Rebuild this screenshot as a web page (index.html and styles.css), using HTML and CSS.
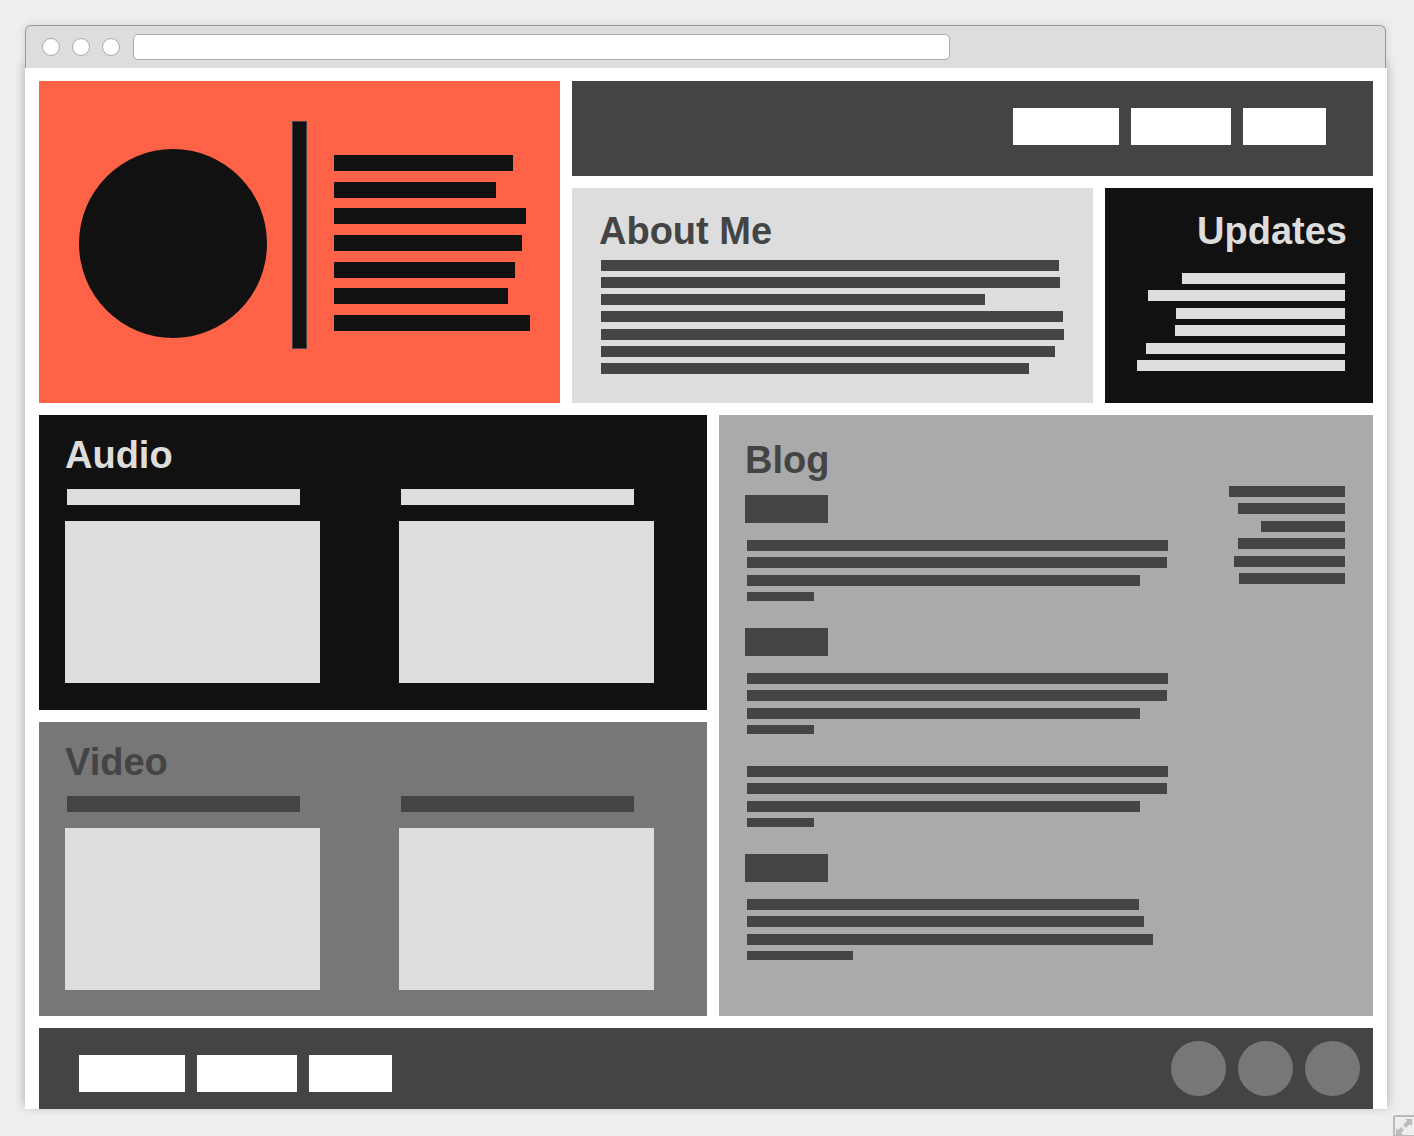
FILE: index.html
```html
<!DOCTYPE html>
<html lang="en">
<head>
<meta charset="utf-8">
<meta name="viewport" content="width=device-width, initial-scale=1">
<title>Wireframe</title>
<link rel="stylesheet" href="styles.css">
</head>
<body>
<div class="browser">
  <div class="toolbar">
    <div class="dots"><span class="dot"></span><span class="dot"></span><span class="dot"></span></div>
    <input class="address" type="text" aria-label="Address">
  </div>
  <div class="page">
    <div class="top">
      <section class="panel hero">
        <div class="portrait"></div>
        <div class="divider"></div>
        <div class="lines lines-hero">
          <i style="width:179px"></i><i style="width:162px"></i><i style="width:192px"></i><i style="width:188px"></i><i style="width:181px"></i><i style="width:174px"></i><i style="width:196px"></i>
        </div>
      </section>
      <nav class="panel links links-top" aria-label="Main">
        <a class="link link-l" href="#about" aria-label="About Me"></a>
        <a class="link link-m" href="#audio" aria-label="Audio"></a>
        <a class="link link-s" href="#blog" aria-label="Blog"></a>
      </nav>
      <div class="intro">
        <section class="panel about" id="about">
          <h2>About Me</h2>
          <div class="lines lines-about">
            <i style="width:458px"></i><i style="width:459px"></i><i style="width:384px"></i><i style="width:462px"></i><i style="width:463px"></i><i style="width:454px"></i><i style="width:428px"></i>
          </div>
        </section>
        <section class="panel updates">
          <h2>Updates</h2>
          <div class="lines lines-right">
            <i style="width:163px"></i><i style="width:197px"></i><i style="width:169px"></i><i style="width:170px"></i><i style="width:199px"></i><i style="width:208px"></i>
          </div>
        </section>
      </div>
    </div>
    <div class="middle">
      <div class="media-column">
        <section class="panel media audio" id="audio">
          <h2>Audio</h2>
          <div class="clips">
            <div class="clip"><div class="clip-title"></div><div class="clip-box"></div></div>
            <div class="clip"><div class="clip-title"></div><div class="clip-box"></div></div>
          </div>
        </section>
        <section class="panel media video">
          <h2>Video</h2>
          <div class="clips">
            <div class="clip"><div class="clip-title"></div><div class="clip-box"></div></div>
            <div class="clip"><div class="clip-title"></div><div class="clip-box"></div></div>
          </div>
        </section>
      </div>
      <section class="panel blog" id="blog">
        <div class="posts">
          <h2>Blog</h2>
          <article class="post">
            <div class="tag"></div>
            <div class="lines lines-post"><i style="width:421px"></i><i style="width:420px"></i><i style="width:393px"></i><i class="more" style="width:67px"></i></div>
          </article>
          <article class="post">
            <div class="tag"></div>
            <div class="lines lines-post"><i style="width:421px"></i><i style="width:420px"></i><i style="width:393px"></i><i class="more" style="width:67px"></i></div>
            <div class="lines lines-post continued"><i style="width:421px"></i><i style="width:420px"></i><i style="width:393px"></i><i class="more" style="width:67px"></i></div>
          </article>
          <article class="post">
            <div class="tag"></div>
            <div class="lines lines-post"><i style="width:392px"></i><i style="width:397px"></i><i style="width:406px"></i><i class="more" style="width:106px"></i></div>
          </article>
        </div>
        <aside class="archive">
          <div class="lines lines-right">
            <i style="width:116px"></i><i style="width:107px"></i><i style="width:84px"></i><i style="width:107px"></i><i style="width:111px"></i><i style="width:106px"></i>
          </div>
        </aside>
      </section>
    </div>
    <footer class="panel footer">
      <nav class="links links-bottom" aria-label="Footer">
        <a class="link link-l" href="#about" aria-label="About Me"></a>
        <a class="link link-m" href="#audio" aria-label="Audio"></a>
        <a class="link link-s" href="#blog" aria-label="Blog"></a>
      </nav>
      <div class="social"><span></span><span></span><span></span></div>
    </footer>
  </div>
</div>
<button class="expand" type="button" aria-label="Full screen">
  <svg width="21" height="21" viewBox="0 0 21 21" aria-hidden="true">
    <rect x="1" y="1" width="24" height="20" rx="1" fill="none" stroke="#bbb" stroke-width="2"/>
    <path d="M12 4h7v7l-2-2-4 4-3-3 4-4zM3 20v-7l2 2 3-3 3 3-3 3 2 2z" fill="#bbb"/>
  </svg>
</button>
</body>
</html>
```
FILE: styles.css
```css
* {
  box-sizing: border-box;
}

body {
  margin: 0;
  padding: 25px 27px 27px 25px;
  background: #eee;
  font-family: "Liberation Sans", Arial, Helvetica, sans-serif;
}

h2 {
  margin: 0;
  font-size: 38px;
  line-height: 44px;
  font-weight: bold;
}

/* Browser frame */
.toolbar {
  position: relative;
  display: flex;
  align-items: flex-start;
  gap: 13px;
  height: 43px;
  margin-right: 1px;
  padding: 8px 16px 0;
  background: #ddd;
  border: 1px solid #999;
  border-bottom: 0;
  border-radius: 6px 6px 0 0;
  box-shadow: 0 0 8px rgba(0, 0, 0, 0.12);
  /* keeps the shadow off the page below */
  clip-path: inset(-12px -12px 0 -12px);
}

.dots {
  display: flex;
  gap: 12px;
  padding-top: 4px;
}

.dot {
  width: 18px;
  height: 18px;
  background: #fff;
  border: 1px solid #aaa;
  border-radius: 50%;
}

.address {
  width: 817px;
  max-width: 75%;
  height: 26px;
  padding: 0 8px;
  background: #fff;
  border: 1px solid #aaa;
  border-radius: 5px;
}

.page {
  display: flex;
  flex-direction: column;
  gap: 12px;
  padding: 13px 14px 0;
  background: #fff;
  box-shadow: 0 -3px 10px rgba(0, 0, 0, 0.3);
}

/* Rows of placeholder text */
.lines {
  display: flex;
  flex-direction: column;
  justify-content: space-between;
}

.lines i {
  height: 11px;
  max-width: 100%;
  background: currentColor;
}

.lines-right {
  height: 98px;
  align-items: flex-end;
}

/* Top row */
.top {
  display: grid;
  grid-template-columns: minmax(0, 521fr) minmax(0, 801fr);
  grid-template-rows: 95px auto;
  gap: 12px;
}

.hero {
  grid-row: span 2;
  display: flex;
  align-items: center;
  padding: 40px 27px 38px 40px;
  background: #ff6347;
  color: #111;
}

.portrait {
  width: 188px;
  height: 189px;
  margin-right: 25px;
  border-radius: 50%;
  background: #111;
}

.divider {
  align-self: flex-start;
  width: 15px;
  height: 228px;
  margin-right: 27px;
  background: #111;
  border: 1px solid #444;
}

.lines-hero {
  flex: 1;
  height: 176px;
}

.lines-hero i {
  height: 16px;
}

.links {
  display: flex;
  align-items: flex-start;
  gap: 12px;
}

.link {
  height: 37px;
  background: #fff;
}

.link-l {
  width: 106px;
}

.link-m {
  width: 100px;
}

.link-s {
  width: 83px;
}

.links-top {
  justify-content: flex-end;
  padding: 27px 47px 27px 27px;
  background: #444;
}

.intro {
  display: grid;
  grid-template-columns: minmax(0, 521fr) minmax(0, 268fr);
  gap: 12px;
}

.about {
  padding: 21px 27px 29px;
  background: #ddd;
  color: #444;
}

.lines-about {
  height: 114px;
  margin: 7px 0 0 2px;
}

.updates {
  padding: 21px 26px 32px;
  background: #111;
  color: #ddd;
  text-align: right;
}

.updates .lines {
  margin: 20px 2px 0;
}

/* Media and blog */
.middle {
  display: grid;
  grid-template-columns: minmax(0, 668fr) minmax(0, 654fr);
  gap: 12px;
}

.media-column {
  display: grid;
  grid-template-rows: 1fr 1fr;
  gap: 12px;
}

.media {
  padding: 18px 0 26px;
}

.media h2 {
  padding-left: 26px;
}

.audio {
  background: #111;
  color: #ddd;
}

.video {
  background: #777;
  color: #444;
}

.clips {
  display: grid;
  grid-template-columns: 1fr 1fr;
  margin-top: 12px;
}

.clip {
  padding: 0 53px 0 26px;
}

.clip-title {
  height: 16px;
  margin: 0 20px 16px 2px;
  background: currentColor;
}

.clip-box {
  height: 162px;
  background: #ddd;
}

.blog {
  display: flex;
  justify-content: space-between;
  padding: 23px 28px 56px 26px;
  background: #aaa;
  color: #444;
}

.posts {
  flex: 1;
}

.post {
  margin-top: 27px;
}

h2 + .post {
  margin-top: 13px;
}

.tag {
  width: 83px;
  height: 28px;
  margin-bottom: 17px;
  background: #444;
}

.lines-post {
  height: 61px;
  margin-left: 2px;
}

.lines-post .more {
  height: 9px;
}

.continued {
  margin-top: 32px;
}

.archive {
  width: 116px;
  padding-top: 48px;
}

/* Footer */
.footer {
  display: flex;
  justify-content: space-between;
  padding: 13px 13px 13px 40px;
  background: #444;
}

.links-bottom {
  padding-top: 14px;
}

.social {
  display: flex;
  gap: 12px;
}

.social span {
  width: 55px;
  height: 55px;
  border-radius: 50%;
  background: #777;
}

.expand {
  position: fixed;
  right: 0;
  bottom: 0;
  padding: 0;
  border: 0;
  background: none;
  cursor: pointer;
}

.expand svg {
  display: block;
}
```
